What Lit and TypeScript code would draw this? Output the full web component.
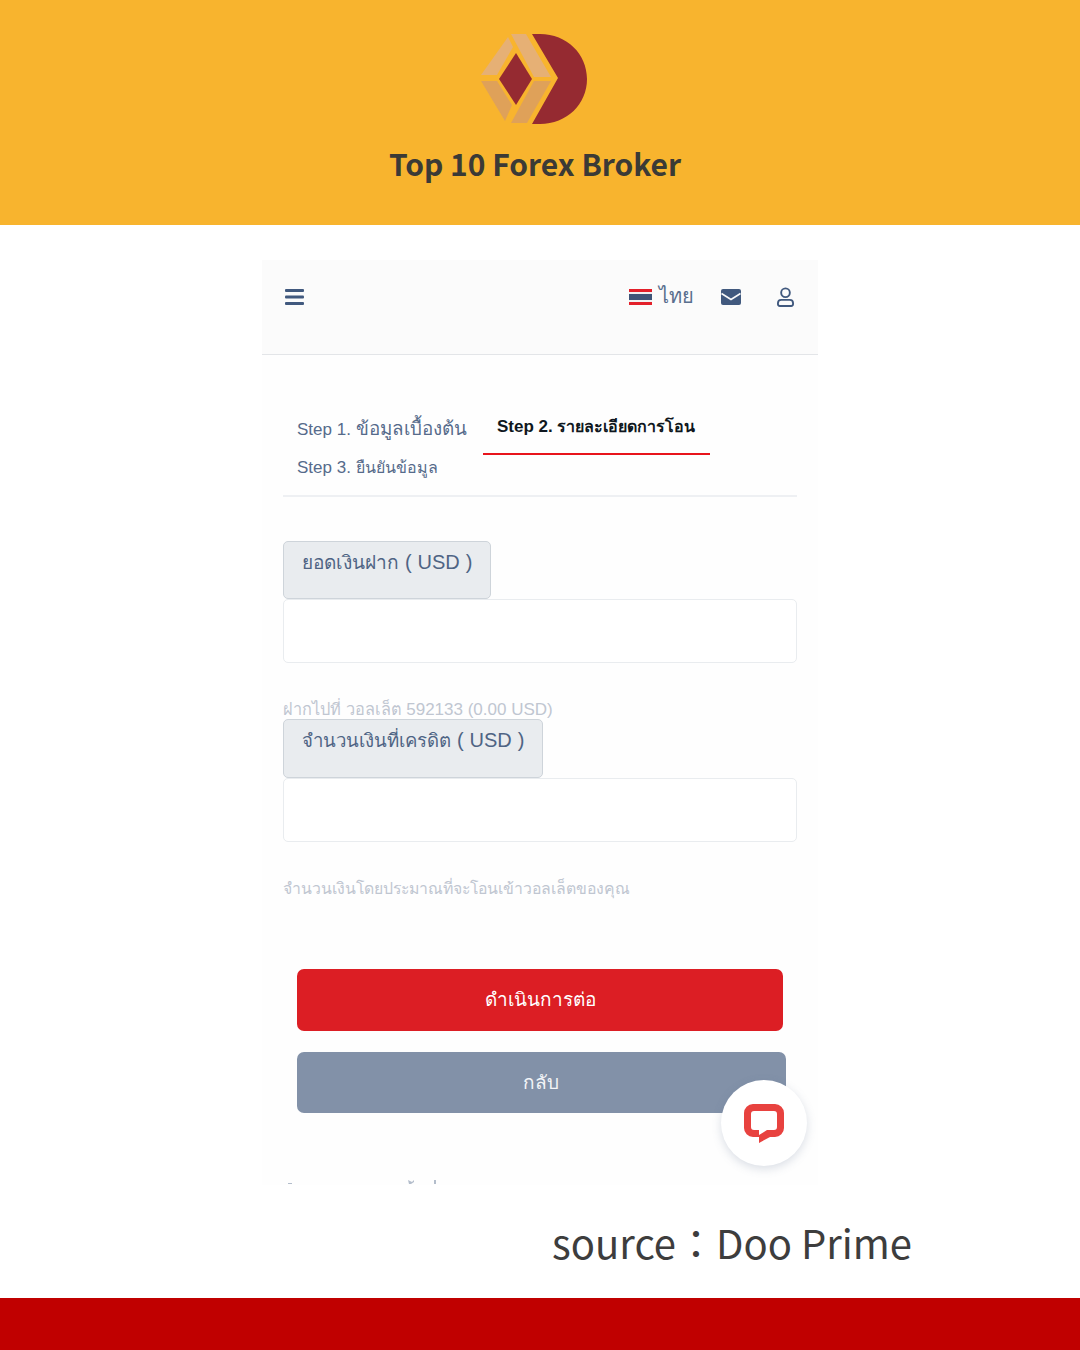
import { LitElement, html, css } from "lit";
import { customElement } from "lit/decorators.js";

@customElement("app-root")
export class AppRoot extends LitElement {
  static styles = css`
    :host { display: flex; flex-direction: column; width: 1080px; height: 1350px; background: #fff; font-family: "Liberation Sans", Arial, sans-serif; overflow: hidden; }
    .hero { height: 225px; background: #f8b42e; display: flex; flex-direction: column; align-items: center; padding-top: 34px; box-sizing: border-box; }
    .logo { display: block; width: 108px; height: 90px; margin-left: -12px; }
    .hero h1 { margin: 15px 0 0 -10px; font: 700 30px/48px "Noto Sans CJK TC", "Noto Sans", sans-serif; color: #3b3a36; white-space: nowrap; }
    .main { flex: 1; display: flex; flex-direction: column; align-items: center; padding-top: 35px; min-height: 0; }
    .card { position: relative; width: 556px; height: 925px; background: #fefefe; box-sizing: border-box; }
    .nav { height: 95px; background: #fbfbfb; border-bottom: 1px solid #e3e5e8; box-sizing: border-box; display: flex; align-items: center; padding: 0 24px 21px 23px; color: #41597e; }
    .spacer { flex: 1; }
    .burger { display: block; width: 19px; height: 16px; }
    .flag { display: block; width: 23px; height: 16px; }
    .lang { margin: -2px 0 0 7px; width: 33px; font-size: 20px; line-height: 24px; color: #5a6f8e; white-space: nowrap; font-family: "Noto Sans", "Liberation Sans", sans-serif; }
    .mail { display: block; width: 20px; height: 16px; margin-left: 29px; }
    .user { display: block; width: 17px; height: 20px; margin-left: 36px; }
    .content { padding: 48px 21px 0; }
    .tabs { display: flex; flex-wrap: wrap; align-items: flex-start; column-gap: 1px; border-bottom: 2px solid #eef0f3; padding-bottom: 15px; }
    .tab { font-size: 17px; line-height: 24px; color: #566b8b; white-space: nowrap; box-sizing: border-box; padding: 14px 14px 0; width: 199px; }
    .tab.active { width: 227px; padding: 12px 14px 14px; color: #0f1720; font-weight: 700; border-bottom: 2px solid #e8141c; }
    .tab.third { padding-top: 1px; }
    .t1 { font-size: 18.8px; }
    .t2 { font-size: 16px; }
    .t3 { font-size: 16px; }
    .group-first { margin-top: 44px; }
    .label { display: inline-block; vertical-align: top; height: 58px; box-sizing: border-box; padding: 6px 18px 0; background: #e9ecef; border: 1px solid #ced4da; border-radius: 5px; font-size: 20px; line-height: 28px; word-spacing: 0.4px; color: #4f6484; white-space: nowrap; }
    .label.tall { height: 59px; }
    .l1 { font-size: 19.1px; }
    .l2 { font-size: 18.6px; }
    .input { height: 64px; box-sizing: border-box; background: #fff; border: 1px solid #e9ecef; border-radius: 5px; }
    .help { font-size: 17px; line-height: 20px; color: #c0c6d1; white-space: nowrap; }
    .help.a { margin-top: 36px; height: 20px; }
    .help.b { margin-top: 37px; font-size: 15.82px; }
    .h1 { font-size: 16.3px; }
    .actions { margin-top: 70px; padding: 0 14px; display: flex; flex-direction: column; align-items: flex-start; gap: 21px; }
    .btn { height: 62px; display: flex; align-items: center; justify-content: center; border-radius: 7px; color: #fff; font-size: 19px; box-sizing: border-box; padding-bottom: 2px; }
    .btn.go { width: 486px; background: #dc1e24; }
    .btn.back { width: 489px; height: 61px; background: #8291a8; color: #f2f4f7; padding-right: 2px; }
    .chat { position: absolute; left: 459px; top: 820px; width: 86px; height: 86px; border-radius: 50%; background: #fff; box-shadow: 0 3px 10px rgba(90, 110, 140, 0.22); display: flex; align-items: center; justify-content: center; }
    .chat svg { display: block; width: 40px; height: 39px; margin-top: 1px; }
    .marks { position: absolute; left: 0; bottom: 0; display: block; width: 556px; height: 6px; opacity: 0.45; }
    .source { height: 113px; width: 100%; box-sizing: border-box; padding: 31px 168px 0 0; text-align: right; font: 400 40px/52px "Noto Sans CJK TC", "Noto Sans", sans-serif; color: #3d3d3d; white-space: nowrap; }
    .bar { height: 52px; background: #c00000; }
  `;

  render() {
    return html`
      <section class="hero">
        <svg class="logo" viewBox="480 34 108 90">
          <path fill="#952a31" d="M532 34 H540 C567 34 587 54 587 79 C587 104 567 124 540 124 H532 L558 78 Z"/>
          <path fill="#952a31" d="M516 53 L532 79 L516 105 L499 79 Z"/>
          <path fill="#e6b075" d="M511 34 H526 L551 77 H534 Z"/>
          <path fill="#e6b075" d="M508 37 L513 47 L497 75 H481 Z"/>
          <path fill="#dfa159" d="M481 81 H497 L512 105 L505 121 Z"/>
          <path fill="#dfa159" d="M534 81 H551 L527 123 H511 Z"/>
        </svg>
        <h1>Top 10 Forex Broker</h1>
      </section>
      <main class="main">
        <div class="card">
          <nav class="nav">
            <svg class="burger" viewBox="0 0 19 16" fill="#41597e"><rect width="19" height="3" rx="1"/><rect y="6.5" width="19" height="3" rx="1"/><rect y="13" width="19" height="3" rx="1"/></svg>
            <div class="spacer"></div>
            <svg class="flag" viewBox="0 0 23 16"><rect width="23" height="16" fill="#e3202a"/><rect y="3" width="23" height="10" fill="#f1f1f1"/><rect y="5" width="23" height="6" fill="#3f5578"/></svg>
            <span class="lang">ไทย</span>
            <svg class="mail" viewBox="0 0 20 16"><rect width="20" height="16" rx="2" fill="#41597e"/><path d="M0.5 4.5 L10 10.5 L19.5 4.5" fill="none" stroke="#fafafa" stroke-width="1.6"/></svg>
            <svg class="user" viewBox="0 0 18 21" fill="none" stroke="#41597e" stroke-width="2"><circle cx="9" cy="6" r="4.6"/><path d="M4.5 13.5 H13.5 C15.5 13.5 17 15 17 17 V18 C17 19.2 16.2 20 15 20 H3 C1.8 20 1 19.2 1 18 V17 C1 15 2.500 13.500 4.500 13.500 Z"/></svg>
          </nav>
          <div class="content">
            <div class="tabs">
              <div class="tab">Step 1. <span class="t1">ข้อมูลเบื้องต้น</span></div>
              <div class="tab active">Step 2. <span class="t2">รายละเอียดการโอน</span></div>
              <div class="tab third">Step 3. <span class="t3">ยืนยันข้อมูล</span></div>
            </div>
            <div class="group-first">
              <div class="label"><span class="l1">ยอดเงินฝาก</span> ( USD )</div>
              <div class="input"></div>
            </div>
            <div class="help a"><span class="h1">ฝากไปที่ วอลเล็ต</span> 592133 (0.00 USD)</div>
            <div>
              <div class="label tall"><span class="l2">จำนวนเงินที่เครดิต</span> ( USD )</div>
              <div class="input"></div>
            </div>
            <div class="help b">จำนวนเงินโดยประมาณที่จะโอนเข้าวอลเล็ตของคุณ</div>
            <div class="actions">
              <div class="btn go">ดำเนินการต่อ</div>
              <div class="btn back">กลับ</div>
            </div>
          </div>
          <div class="chat">
            <svg viewBox="0 0 40 39"><path fill="#e8423f" fill-rule="evenodd" d="M9 0 H31 A9 9 0 0 1 40 9 V24 A9 9 0 0 1 31 33 H26 L15 39 V33 H9 A9 9 0 0 1 0 24 V9 A9 9 0 0 1 9 0 Z M10 7 A3 3 0 0 0 7 10 V23 A3 3 0 0 0 10 26 H15 V31 L23 26 H30 A3 3 0 0 0 33 23 V10 A3 3 0 0 0 30 7 Z"/></svg>
          </div>
          <svg class="marks" viewBox="0 0 556 6" fill="#5a6f8e"><rect x="26" y="4" width="4" height="1"/><path d="M146 1 L150 3 L152 1 V3 L149 5 H147 Z"/><rect x="172" y="1" width="2" height="4"/></svg>
        </div>
        <div class="source">source：Doo Prime</div>
      </main>
      <div class="bar"></div>
    `;
  }
}
